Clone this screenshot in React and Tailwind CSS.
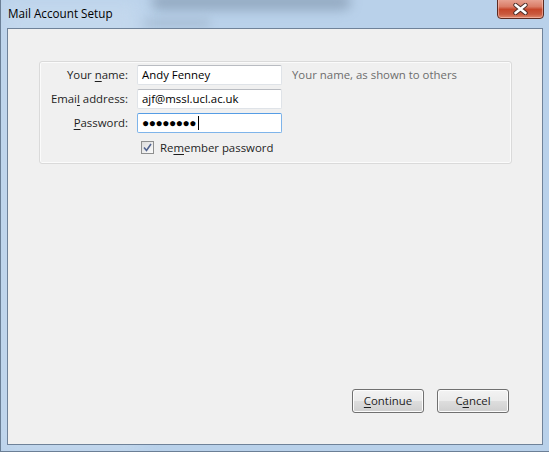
import React from "react";

const font = { fontFamily: '"Open Sans", "Noto Sans", sans-serif' };

const Field = ({ label, accel, value, focused, password }) => {
  const i = label.indexOf(accel);
  return (
    <>
      <label className="text-right text-[11.4px] text-[#1e1e1e] leading-[20px] pr-[1px]">
        {label.slice(0, i)}
        <span className="underline underline-offset-2">{accel}</span>
        {label.slice(i + 1)}
      </label>
      <div
        className={`h-[20px] rounded-[2px] border bg-white px-[4px] flex items-center text-[11.4px] text-black ${
          focused
            ? "border-[#7eb4ea] border-t-[#569de5]"
            : "border-[#dfe3e8] border-t-[#b9bcc2]"
        }`}
      >
        {password ? (
          <span className="flex items-center">
            <span className="tracking-[-0.5px] text-[12px] leading-none">{"\u25CF".repeat(8)}</span>
            <span className="ml-[2px] w-px h-[14px] bg-black" />
          </span>
        ) : (
          value
        )}
      </div>
    </>
  );
};

const Button = ({ children }) => (
  <button className="w-[72px] h-[24px] rounded-[3px] border border-[#707070] bg-[linear-gradient(#f3f3f3_0%,#ebebeb_48%,#dddddd_52%,#cfcfcf_100%)] text-[11.4px] text-[#1e1e1e] shadow-[inset_0_0_0_1px_#fcfcfc]">
    {children}
  </button>
);

export default function App() {
  return (
    <div
      className="relative w-[549px] h-[452px] overflow-hidden bg-[#b9d1ea] border-l border-b border-[#6b7f96] flex flex-col"
      style={font}
    >
      <div className="absolute left-[150px] top-[-6px] w-[200px] h-[16px] rounded-full bg-[#8499b0] blur-[6px] opacity-70" />
      <div className="absolute left-[140px] top-[18px] w-[70px] h-[10px] rounded-full bg-[#9fb4ca] blur-[5px] opacity-60" />
      <div className="absolute left-[0px] top-[0px] w-[140px] h-[452px] bg-[#c8dbef] blur-[10px] opacity-70" />

      <div className="relative h-[28px] shrink-0 flex items-center pl-[7px] text-[11.7px] text-black">
        Mail Account Setup
        <div className="absolute left-[496px] top-[-2px] w-[47px] h-[21px] rounded-b-[4px] border border-[#5c2b22] bg-[linear-gradient(#e9a797_0%,#da7d67_40%,#c6472b_55%,#c95a3f_80%,#e08a6e_100%)] shadow-[inset_0_0_0_1px_rgba(255,210,200,0.5)] flex items-center justify-center">
          <svg width="15" height="12" viewBox="0 0 15 12">
            <path
              d="M2.5 2 L12.5 10 M12.5 2 L2.5 10"
              stroke="#4a2b26"
              strokeWidth="4.4"
              strokeLinecap="round"
            />
            <path
              d="M2.5 2 L12.5 10 M12.5 2 L2.5 10"
              stroke="#ffffff"
              strokeWidth="2.6"
              strokeLinecap="round"
            />
          </svg>
        </div>
      </div>

      <div className="relative ml-[6px] mr-[6px] h-[417px] border border-[#6f8299] bg-[#f0f0f0] flex flex-col">
        <div className="ml-[31px] mt-[32px] w-[473px] h-[103px] rounded-[3px] border border-[#dadada] shadow-[inset_0_0_0_1px_#fbfbfb] pt-[3px]">
          <div className="grid grid-cols-[89px_145px_auto] gap-x-[8px] gap-y-[4px] items-center">
            <Field label="Your name:" accel="n" value="Andy Fenney" />
            <span className="ml-[2px] text-[11.4px] text-[#6d6d6d]">Your name, as shown to others</span>
            <Field label="Email address:" accel="l" value="ajf@mssl.ucl.ac.uk" />
            <span />
            <Field label="Password:" accel="P" focused password />
            <span />
          </div>
          <div className="flex items-center ml-[101px] mt-[6px] text-[11.4px] text-[#1e1e1e]">
            <span className="w-[13px] h-[13px] border border-[#8e8f8f] bg-[linear-gradient(135deg,#dcdcdc,#fbfbfb)] flex items-center justify-center">
              <svg width="9" height="9" viewBox="0 0 9 9">
                <path d="M1 4.5 L3.5 7.5 L8 1" fill="none" stroke="#51638f" strokeWidth="1.6" />
              </svg>
            </span>
            <span className="ml-[6px]">
              Re<span className="underline underline-offset-2">m</span>ember password
            </span>
          </div>
        </div>

        <div className="mt-auto mb-[31px] mr-[33px] flex justify-end gap-[13px]">
          <Button>
            <span className="underline underline-offset-2">C</span>ontinue
          </Button>
          <Button>
            C<span className="underline underline-offset-2">a</span>ncel
          </Button>
        </div>
      </div>
    </div>
  );
}
